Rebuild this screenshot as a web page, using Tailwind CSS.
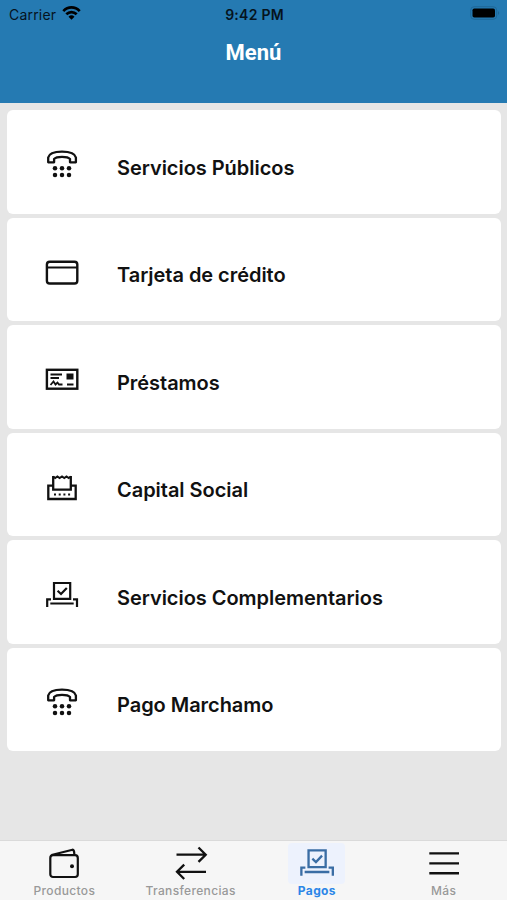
<!DOCTYPE html>
<html lang="es">
<head>
<meta charset="utf-8">
<title>Menú</title>
<script src="https://cdn.jsdelivr.net/npm/@tailwindcss/browser@4"></script>
</head>
<body class="w-[507px] h-[900px] overflow-hidden bg-[#e6e6e6] font-['Inter',sans-serif] flex flex-col">
<svg class="hidden">
  <symbol id="phone" viewBox="0 0 36 36"><g fill="none" stroke="currentColor" stroke-width="2.3" stroke-linejoin="round"><path d="M4.200 16.300V11.600C5 7.800 10.500 5.700 18 5.700S31 7.800 31.900 11.600V16.300H26V13C24.500 11.300 21.500 10.900 18 10.900S11.600 11.300 10.100 13V16.300Z"/></g><g fill="currentColor"><circle cx="11" cy="22.300" r="2.250"/><circle cx="18" cy="22.300" r="2.250"/><circle cx="25" cy="22.300" r="2.250"/><circle cx="11" cy="29" r="2.250"/><circle cx="18" cy="29" r="2.250"/><circle cx="25" cy="29" r="2.250"/></g></symbol>
  <symbol id="ballot" viewBox="0 0 36 36"><g fill="none" stroke="currentColor" stroke-width="2.200"><path d="M10 7H26.200V22.900H10ZM6.300 27.500H29.700M7 23.300H3.200V31M29 23.300H33V31"/><path d="M13.600 14.800L17 18L22.800 12"/></g></symbol>
</svg>

<header class="h-[103px] shrink-0 bg-[#257ab2]">
  <div class="grid grid-cols-3 items-center h-[28px] pl-[9px] pr-[7px] text-[14px] text-[#05131d]">
    <div class="flex items-center gap-[6px]">
      <span class="tracking-[0.200px]">Carrier</span>
      <svg class="w-[19px] h-[14px] -mt-[2px]" viewBox="0 0 19 14" fill="none" stroke="black" stroke-width="2.700"><path d="M1.300 5.100C6 .2 13 .2 17.700 5.100M4.300 8.300C7.300 5.300 11.700 5.300 14.700 8.300"/><path d="M9.500 13.700L6.500 10.700Q9.500 8 12.500 10.700Z" fill="black" stroke="none"/></svg>
    </div>
    <div class="text-center font-semibold text-[14px] tracking-[0.250px] whitespace-nowrap">9:42 PM</div>
    <svg class="justify-self-end w-[30px] h-[14px] -mt-[2px]" viewBox="0 0 30 14"><rect x=".7" y=".7" width="26" height="12.600" rx="3.500" fill="none" stroke="#1f6898"/><rect x="2.500" y="2.500" width="22.500" height="9" rx="1.800"/><path d="M28 5Q30.500 7 28 9Z" fill="#1f6898"/></svg>
  </div>
  <h1 class="text-center font-['Roboto',sans-serif] font-bold text-[22px] leading-[26px] pt-[12px] text-white">Menú</h1>
</header>

<main class="flex-1 pt-[7px] pl-[7px] pr-[6px] flex flex-col gap-[4px] text-[20px] font-semibold tracking-[-0.040px] text-[#111]">
  <div class="h-[103.500px] shrink-0 rounded-[6px] bg-white flex items-center pl-[37px] gap-[37px]"><svg class="size-[36px] mt-[4px]"><use href="#phone"/></svg><span class="pt-[12px]">Servicios Públicos</span></div>
  <div class="h-[103.500px] shrink-0 rounded-[6px] bg-white flex items-center pl-[37px] gap-[37px]"><svg class="size-[36px] mt-[5px]" viewBox="0 0 36 36" fill="none" stroke="currentColor"><rect x="2.900" y="7.700" width="30.400" height="21.800" rx="2.800" stroke-width="2.400"/><path d="M3 13.500H33" stroke-width="2"/></svg><span class="pt-[12px]">Tarjeta de crédito</span></div>
  <div class="h-[103.500px] shrink-0 rounded-[6px] bg-white flex items-center pl-[37px] gap-[37px]"><svg class="size-[36px] mt-[5px]" viewBox="0 0 36 36" fill="none" stroke="currentColor"><rect x="2.900" y="8.800" width="30.400" height="18.900" stroke-width="2.400"/><path d="M6.500 13.500H18M6.500 17H15M23 23.500H29.500" stroke-width="1.800"/><path d="M6.500 24L9.500 20.500L11.500 23.500L13.500 21.500L15 23.500H18.500" stroke-width="1.800"/><rect x="22.500" y="12.500" width="7" height="6" fill="currentColor" stroke="none"/></svg><span class="pt-[12px]">Préstamos</span></div>
  <div class="h-[103.500px] shrink-0 rounded-[6px] bg-white flex items-center pl-[37px] gap-[37px]"><svg class="size-[36px] mt-[5px]" viewBox="0 0 36 36" fill="none" stroke="currentColor" stroke-width="2.300"><path d="M9 16.700H4.300V30H31.700V16.700H27"/><path d="M9.200 7V20.700H26.800V7"/><path d="M9.200 7.500L11.200 9L13.400 7.500L15.600 9L18 7.500L20.300 9L22.500 7.500L24.700 9L26.800 7.500" stroke-width="2"/><path d="M10 25.500h2M14.700 25.500h2M19.400 25.500h2M24.100 25.500h2" stroke-width="2"/></svg><span class="pt-[12px]">Capital Social</span></div>
  <div class="h-[103.500px] shrink-0 rounded-[6px] bg-white flex items-center pl-[37px] gap-[37px]"><svg class="size-[36px] mt-[5px]"><use href="#ballot"/></svg><span class="pt-[12px]">Servicios Complementarios</span></div>
  <div class="h-[103.500px] shrink-0 rounded-[6px] bg-white flex items-center pl-[37px] gap-[37px]"><svg class="size-[36px] mt-[5px]"><use href="#phone"/></svg><span class="pt-[12px]">Pago Marchamo</span></div>
</main>

<nav class="h-[60px] shrink-0 bg-[#f6f6f6] border-t border-[#dadada] grid grid-cols-4 text-[12px] leading-[14px] font-medium text-[#999] tracking-[0.350px]">
  <div class="flex flex-col items-center pt-[2px] pl-[2px]"><div class="w-[57px] h-[41px] flex justify-center"><svg class="w-[36px] h-[41px]" viewBox="0 0 36 41" fill="none" stroke="#111" stroke-width="2.200"><rect x="4.300" y="12.200" width="27.500" height="21.800" rx="2.700"/><path d="M5.500 12L26.500 6.700Q28.300 7 28.300 11" stroke-linejoin="round"/><circle cx="26" cy="23.300" r="2" fill="#111" stroke="none"/></svg></div><span>Productos</span></div>
  <div class="flex flex-col items-center pt-[2px] pl-[1px]"><div class="w-[57px] h-[41px] flex justify-center"><svg class="w-[36px] h-[41px]" viewBox="0 0 36 41" fill="none" stroke="#111" stroke-width="2.300"><path d="M3.500 11.700H33M25.500 4.500L32.700 11.700L25.500 18.900M33 28.800H4M11.200 21.600L4 28.800L11.200 36"/></svg></div><span>Transferencias</span></div>
  <div class="flex flex-col items-center pt-[2px]"><div class="w-[57px] h-[41px] flex justify-center bg-[#edf2fd] rounded-[4px]"><svg class="size-[38px] text-[#3a6da4]"><use href="#ballot"/></svg></div><span class="font-bold text-[#2b86e8]">Pagos</span></div>
  <div class="flex flex-col items-center pt-[2px]"><div class="w-[57px] h-[41px] flex justify-center"><svg class="w-[36px] h-[41px]" viewBox="0 0 36 41" stroke="#111" stroke-width="2.400"><path d="M3.300 10.400H33M3.300 20.400H33M3.300 30.200H33"/></svg></div><span>Más</span></div>
</nav>
</body>
</html>
